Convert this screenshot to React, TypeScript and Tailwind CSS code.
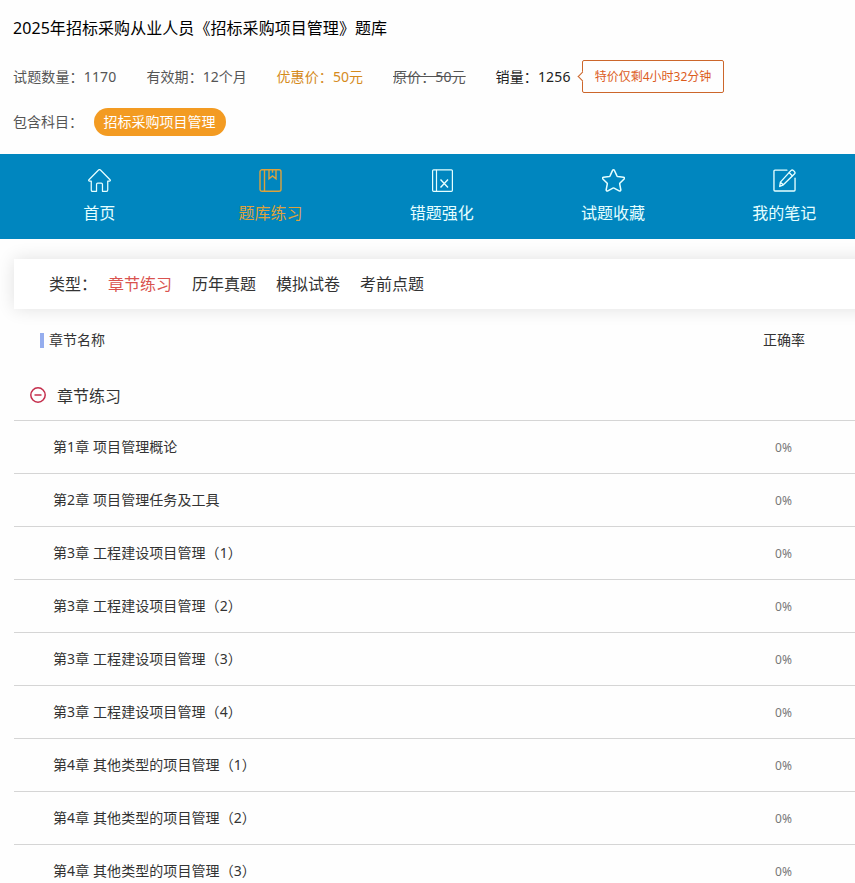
import type { ReactNode } from 'react';

function HomeIcon() {
  return (
    <svg width="23" height="23" viewBox="0 0 24 24" fill="none" stroke="currentColor" strokeWidth="1.3" strokeLinejoin="round" strokeLinecap="round">
      <path d="M3.4 12.6H1.6c-.9 0-1.2-.8-.6-1.4L11 1.1c.6-.6 1.4-.6 2 0L23 11.200c.6.6.3 1.400-.6 1.400h-1.800V22c0 .8-.5 1.300-1.300 1.300h-4.200v-7c0-1-.4-1.500-1.300-1.500h-3.600c-.9 0-1.300.5-1.300 1.500v7H4.700c-.8 0-1.300-.5-1.300-1.300z" />
    </svg>
  );
}

function BookIcon() {
  return (
    <svg width="23" height="23" viewBox="0 0 23 23" fill="none" stroke="currentColor" strokeWidth="1.4">
      <rect x="1" y="0.800" width="21" height="21.500" rx="2" />
      <path d="M5.500 .8v21.500M10 .8v9l3.500-2.800 3.500 2.800v-9M13.500 .8v3" />
    </svg>
  );
}

function WrongIcon() {
  return (
    <svg width="23" height="23" viewBox="0 0 23 23" fill="none" stroke="currentColor" strokeWidth="1.2">
      <rect x="1.600" y="0.800" width="19.800" height="21.500" rx="1" />
      <path d="M5.500 .8v21.500" />
      <path d="M9.500 10.500l7.500 8M17 10.500l-7.500 8" strokeWidth="1.400" />
    </svg>
  );
}

function StarIcon() {
  return (
    <svg width="23" height="23" viewBox="0 0 24 24" fill="none" stroke="currentColor" strokeWidth="1.6" strokeLinejoin="round">
      <path d="M11 1.500c.4-.9 1.600-.9 2 0l2.600 5.600c.2.400.5.600.9.700l5.900.7c1 .1 1.400 1.200.7 1.900l-4.300 4.200c-.3.300-.4.700-.3 1.100l1.100 5.900c.2 1-.8 1.700-1.700 1.200l-5.300-2.800a1.300 1.300 0 0 0-1.200 0l-5.300 2.800c-.9.500-1.900-.2-1.700-1.200l1.100-5.900c.1-.4 0-.8-.3-1.100L.9 10.400c-.7-.7-.3-1.800.7-1.900l5.900-.7c.4-.1.700-.3.900-.7z" />
    </svg>
  );
}

function NoteIcon() {
  return (
    <svg width="23" height="23" viewBox="0 0 24 24" fill="none" stroke="currentColor" strokeWidth="1.4" strokeLinejoin="round" strokeLinecap="round">
      <path d="M14.500 1.200H2c-.6 0-1 .4-1 1V22c0 .6.400 1 1 1h20c.6 0 1-.4 1-1V9.500" />
      <path d="M18.700 1.700c.8-.8 1.900-.8 2.700 0l.9.900c.8.800.8 1.900 0 2.700L10.800 16.500 7 18.200l.7-4.500zM16.700 3.700l3.600 3.600M7.700 13.700l3.100 2.800" />
    </svg>
  );
}

const navItems: { label: string; icon: ReactNode; active?: boolean }[] = [
  { label: '首页', icon: <HomeIcon /> },
  { label: '题库练习', icon: <BookIcon />, active: true },
  { label: '错题强化', icon: <WrongIcon /> },
  { label: '试题收藏', icon: <StarIcon /> },
  { label: '我的笔记', icon: <NoteIcon /> },
];

const types = ['章节练习', '历年真题', '模拟试卷', '考前点题'];

const chapters = [
  '第1章 项目管理概论',
  '第2章 项目管理任务及工具',
  '第3章 工程建设项目管理（1）',
  '第3章 工程建设项目管理（2）',
  '第3章 工程建设项目管理（3）',
  '第3章 工程建设项目管理（4）',
  '第4章 其他类型的项目管理（1）',
  '第4章 其他类型的项目管理（2）',
  '第4章 其他类型的项目管理（3）',
];

export default function App() {
  return (
    <div className="h-[883px] w-full overflow-hidden bg-[#fefefe] font-['Noto_Sans','Noto_Sans_CJK_SC',sans-serif] text-sm text-[#333]">
      <header className="h-[154px] pl-[13px]">
        <h1 className="pt-4 text-base leading-6 tracking-[0.06px] text-black">2025年招标采购从业人员《招标采购项目管理》题库</h1>
        <div className="mt-5 flex h-[33px] items-center whitespace-nowrap text-[#555]">
          <span className="w-[133.500px] tracking-[0.15px]">试题数量：1170</span>
          <span className="w-[130px] tracking-[0.05px]">有效期：12个月</span>
          <span className="w-[116.500px] tracking-[0.1px] text-[#d58b1c]">优惠价：50元</span>
          <span className="w-[102.500px] tracking-[0.1px]"><s>原价：50元</s></span>
          <span className="w-[86.500px] tracking-[0.15px] text-[#222]">销量：1256</span>
          <span className="relative flex h-[33px] w-[142px] items-center justify-center rounded-[2px] border border-[#cc662b] text-xs text-[#dc5c1c]">
            <i className="absolute -left-[4px] top-[12px] size-[7px] rotate-45 border-b border-l border-[#cc662b] bg-[#fefefe]" />
            特价仅剩4小时32分钟
          </span>
        </div>
        <div className="mt-[15px] flex h-7 items-center text-[#555]">
          <span className="w-[81px]">包含科目：</span>
          <span className="flex h-7 w-[132px] items-center justify-center rounded-full bg-[#f39b22] pr-px text-white">招标采购项目管理</span>
        </div>
      </header>

      <nav className="flex h-[85px] bg-[#0086bf] pl-[13.500px] text-white">
        {navItems.map((item) => (
          <div key={item.label} className={`flex w-[171.300px] shrink-0 flex-col items-center pt-[15px] ${item.active ? 'text-[#dda23c]' : 'text-[#e6ffff]'}`}>
            <span className="pl-px">{item.icon}</span>
            <span className="mt-[9px] text-base leading-6">{item.label}</span>
          </div>
        ))}
      </nav>

      <main className="ml-[14px] pt-5">
        <div className="-mr-5 flex h-[50px] items-center gap-5 bg-white pl-[35px] text-base shadow-[0_0_18px_rgba(0,0,0,0.12)]">
          <span className="-mr-[9px] w-12">类型：</span>
          {types.map((type, index) => (
            <span key={type} className={index === 0 ? 'text-[#d9534f]' : ''}>{type}</span>
          ))}
        </div>
        <div className="flex h-[62px] items-center justify-between pl-[26px] pr-[50px]">
          <span className="flex items-center gap-[5px]">
            <i className="h-[15px] w-1 bg-[#95adee]" />
            章节名称
          </span>
          <span>正确率</span>
        </div>
        <div className="flex h-[50px] items-center border-b border-[#d5d5d5] pl-4">
          <svg className="mb-0.5" width="16" height="16" viewBox="0 0 16 16" fill="none" stroke="#c42e4c" strokeWidth="1.5">
            <circle cx="8" cy="8" r="7.200" />
            <path d="M4.500 8h7" />
          </svg>
          <span className="ml-[11px] text-base">章节练习</span>
        </div>
        {chapters.map((chapter) => (
          <div key={chapter} className="flex h-[53px] items-center justify-between border-b border-[#d5d5d5] pl-[39px]">
            <span className="tracking-[0.08px]">{chapter}</span>
            <span className="w-[143px] pt-0.5 text-center text-xs text-[#777]">0%</span>
          </div>
        ))}
      </main>
    </div>
  );
}
